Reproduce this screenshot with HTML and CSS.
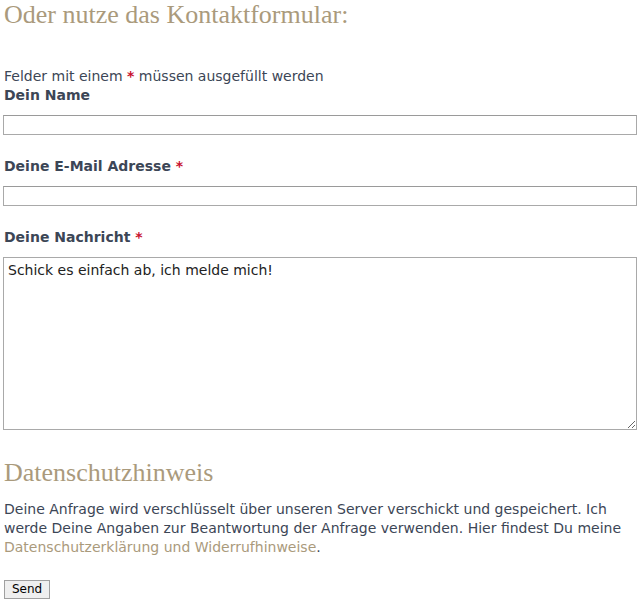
FILE: index.html
```html
<!DOCTYPE html>
<html lang="de">
<head>
<meta charset="utf-8">
<title>Kontakt</title>
<link rel="stylesheet" href="styles.css">
</head>
<body>
<h2 class="title">Oder nutze das Kontaktformular:</h2>
<form class="form">
  <p class="note">Felder mit einem <span class="req">*</span> müssen ausgefüllt werden</p>
  <label class="lbl">Dein Name</label>
  <input class="field" type="text">
  <label class="lbl">Deine E-Mail Adresse <span class="req">*</span></label>
  <input class="field" type="text">
  <label class="lbl">Deine Nachricht <span class="req">*</span></label>
  <textarea class="area">Schick es einfach ab, ich melde mich!</textarea>
  <h2 class="title sub">Datenschutzhinweis</h2>
  <p class="text">Deine Anfrage wird verschlüsselt über unseren Server verschickt und gespeichert. Ich werde Deine Angaben zur Beantwortung der Anfrage verwenden. Hier findest Du meine <a class="link" href="#">Datenschutzerklärung und Widerrufhinweise</a>.</p>
  <button class="send" type="button">Send</button>
</form>
</body>
</html>
```
FILE: styles.css
```css
html, body { margin: 0; padding: 0; background: #fff; }
body {
  padding: 0 3px;
  font-family: "DejaVu Sans", Verdana, sans-serif;
  font-size: 14px;
  color: #3c4656;
  line-height: 19px;
}
.title {
  font-family: "Liberation Serif", "Times New Roman", serif;
  font-weight: normal;
  font-size: 26px;
  line-height: 30px;
  color: #aa9a7c;
  margin: 0 0 0 1px;
}
.form { display: flex; flex-direction: column; align-items: flex-start; margin-top: 37px; }
.note { margin: 0 0 0 1px; line-height: 19px; }
.req { color: #c8102e; font-weight: bold; }
.lbl { font-weight: bold; margin: 0 0 10px 1px; line-height: 19px; }
.field {
  box-sizing: border-box;
  width: 634px;
  height: 20px;
  border: 1px solid #a9a9a9;
  border-top-color: #9a9a9a;
  margin: 0 0 22px 0;
  padding: 1px 3px;
  font: inherit;
}
.area {
  box-sizing: border-box;
  width: 634px;
  height: 173px;
  border: 1px solid #a9a9a9;
  margin: 0;
  padding: 3px 4px;
  font: inherit;
  font-size: 14px;
  color: #222;
  resize: vertical;
}
.sub { margin-top: 28px; margin-bottom: 12px; }
.text { margin: 0 0 0 1px; }
.link { color: #aa9a7c; text-decoration: none; }
.send {
  margin: 23px 0 0 1px;
  font-family: "DejaVu Sans", Verdana, sans-serif;
  font-size: 12px;
  line-height: 15px;
  padding: 1px 7px;
  background: #efefef;
  border: 1px solid #a0a0a0;
  border-radius: 0;
  color: #000;
}
```
